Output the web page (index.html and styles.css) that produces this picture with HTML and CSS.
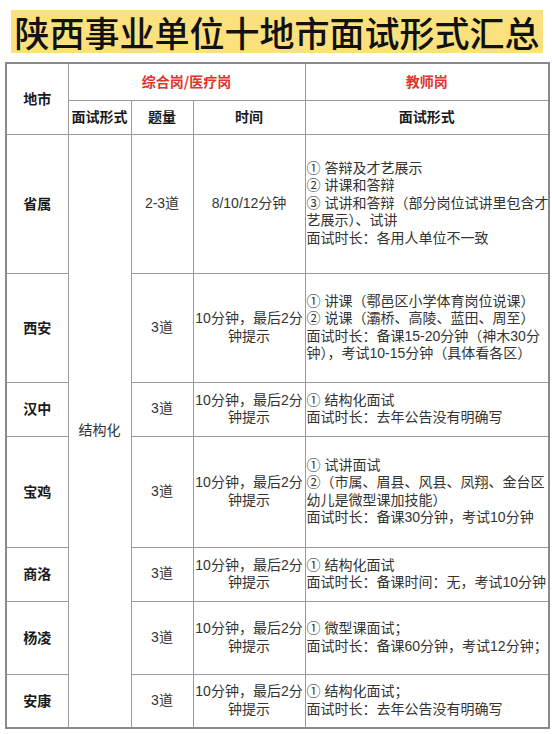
FILE: index.html
```html
<!DOCTYPE html>
<html lang="zh-CN">
<head>
<meta charset="utf-8">
<title>陕西事业单位十地市面试形式汇总</title>
<link rel="stylesheet" href="styles.css">
</head>
<body>
<div class="page">
  <h1 class="title">陕西事业单位十地市面试形式汇总</h1>
  <table class="sheet">
    <colgroup>
      <col class="c-city">
      <col class="c-form">
      <col class="c-count">
      <col class="c-time">
      <col class="c-teach">
    </colgroup>
    <thead>
      <tr class="row-h1">
        <th rowspan="2">地市</th>
        <th colspan="3" class="red">综合岗/医疗岗</th>
        <th class="red">教师岗</th>
      </tr>
      <tr class="row-h2">
        <th>面试形式</th>
        <th>题量</th>
        <th>时间</th>
        <th>面试形式</th>
      </tr>
    </thead>
    <tbody>
      <tr class="row-sheng">
        <th>省属</th>
        <td rowspan="7" class="form">结构化</td>
        <td>2-3道</td>
        <td>8/10/12分钟</td>
        <td class="teach">① 答辩及才艺展示<br>② 讲课和答辩<br>③ 试讲和答辩（部分岗位试讲里包含才<br>艺展示）、试讲<br>面试时长：各用人单位不一致</td>
      </tr>
      <tr class="row-xian">
        <th>西安</th>
        <td>3道</td>
        <td>10分钟，最后2分<br>钟提示</td>
        <td class="teach">① 讲课（鄠邑区小学体育岗位说课）<br>② 说课（灞桥、高陵、蓝田、周至）<br>面试时长：备课15-20分钟（神木30分<br>钟），考试10-15分钟（具体看各区）</td>
      </tr>
      <tr class="row-hanzhong">
        <th>汉中</th>
        <td>3道</td>
        <td>10分钟，最后2分<br>钟提示</td>
        <td class="teach">① 结构化面试<br>面试时长：去年公告没有明确写</td>
      </tr>
      <tr class="row-baoji">
        <th>宝鸡</th>
        <td>3道</td>
        <td>10分钟，最后2分<br>钟提示</td>
        <td class="teach">① 试讲面试<br>②（市属、眉县、风县、凤翔、金台区<br>幼儿是微型课加技能）<br>面试时长：备课30分钟，考试10分钟</td>
      </tr>
      <tr class="row-shangluo">
        <th>商洛</th>
        <td>3道</td>
        <td>10分钟，最后2分<br>钟提示</td>
        <td class="teach">① 结构化面试<br>面试时长：备课时间：无，考试10分钟</td>
      </tr>
      <tr class="row-yangling">
        <th>杨凌</th>
        <td>3道</td>
        <td>10分钟，最后2分<br>钟提示</td>
        <td class="teach">① 微型课面试；<br>面试时长：备课60分钟，考试12分钟；</td>
      </tr>
      <tr class="row-ankang">
        <th>安康</th>
        <td>3道</td>
        <td>10分钟，最后2分<br>钟提示</td>
        <td class="teach">① 结构化面试；<br>面试时长：去年公告没有明确写</td>
      </tr>
    </tbody>
  </table>
</div>
</body>
</html>
```
FILE: styles.css
```css
* { box-sizing: border-box; }

html, body {
  margin: 0;
  padding: 0;
  background: #ffffff;
}

body {
  font-family: "Liberation Sans", "Noto Sans CJK SC", sans-serif;
  color: #333333;
}

.page {
  width: 552px;
  padding: 10px 0 0 0;
}

.title {
  margin: 0 9px 0 11px;
  height: 43px;
  background: #fbe07e;
  font-family: "Noto Sans CJK SC", sans-serif;
  font-weight: 500;
  font-size: 35px;
  line-height: 43px;
  color: #111111;
  text-align: center;
  white-space: nowrap;
  letter-spacing: 0;
}

.sheet {
  margin: 9px 0 0 5px;
  width: 543px;
  border-collapse: collapse;
  table-layout: fixed;
  border: 2px solid #8a8a8a;
  font-size: 14px;
  line-height: 17.5px;
}

.c-city { width: 62px; }
.c-form { width: 63px; }
.c-count { width: 62px; }
.c-time { width: 112px; }
.c-teach { width: 244px; }

.sheet th,
.sheet td {
  border: 1px solid #9a9a9a;
  padding: 0;
  text-align: center;
  vertical-align: middle;
  white-space: nowrap;
}

.sheet th {
  font-family: "Noto Sans CJK SC", sans-serif;
  font-weight: 700;
  color: #1a1a1a;
  font-size: 14px;
}

.sheet th.red {
  color: #e2332d;
}

.sheet td {
  color: #333333;
}

.sheet td.teach {
  text-align: left;
  padding-left: 1px;
}

.row-h1 { height: 37px; }
.row-h2 { height: 34px; }
.row-sheng { height: 139px; }
.row-xian { height: 109px; }
.row-hanzhong { height: 54px; }
.row-baoji { height: 111px; }
.row-shangluo { height: 54px; }
.row-yangling { height: 73px; }
.row-ankang { height: 54px; }
```
